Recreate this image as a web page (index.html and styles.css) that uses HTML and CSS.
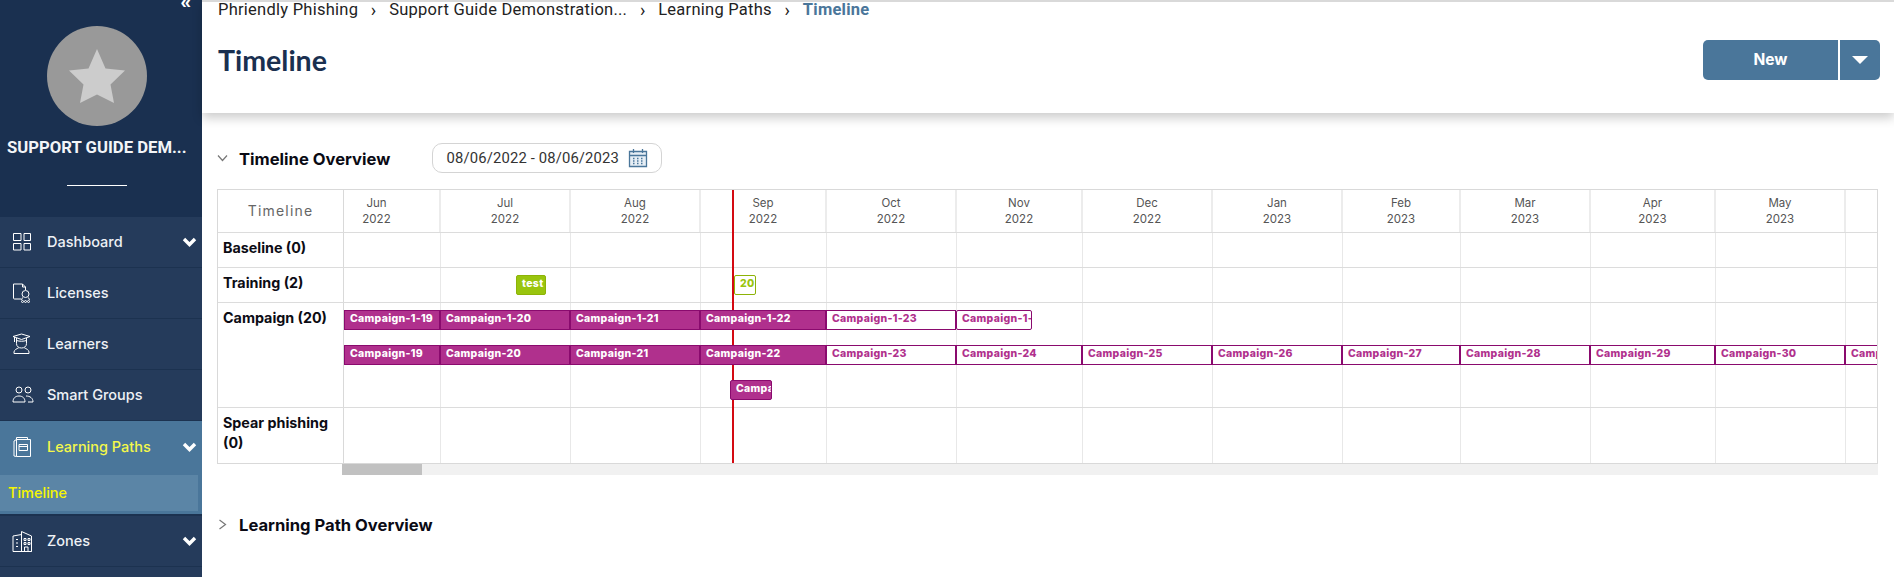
FILE: index.html
```html
<!DOCTYPE html>
<html lang="en">
<head>
<meta charset="utf-8">
<title>Timeline</title>
<link rel="stylesheet" href="styles.css">
</head>
<body>
<div class="app">
  <aside class="sidebar">
    <div class="profile">
      <span class="collapse">«</span>
      <div class="avatar">
        <svg width="58" height="56" viewBox="0 0 58 56"><path class="star" d="M29 1l8.500 19.500L57 22.500l-14.500 14L46 55 29 46.500 12 55l3.500-18.500L1 22.500l19.500-2z"/></svg>
      </div>
      <div class="org">SUPPORT GUIDE DEM...</div>
      <div class="rule"></div>
    </div>
    <nav class="menu">
      <div class="item">
        <svg class="ico" width="20" height="20" viewBox="0 0 20 20"><path d="M1.500 1.500h7.500v7h-7.500zM12 1.500h6.500v7h-6.500zM1.500 11.500h7.500v6.500h-7.500zM12 11.500h6.500v6.500h-6.500z"/></svg>
        <span>Dashboard</span><svg class="chev" width="15" height="10" viewBox="0 0 15 10"><path d="M2 2l5.500 5.500L13 2"/></svg>
      </div>
      <div class="item">
        <svg class="ico" width="20" height="22" viewBox="0 0 20 22"><path d="M9 17H2.500a1 1 0 0 1-1-1V2h9l3 3v3M10.500 2v3h3"/><circle cx="13.500" cy="12" r="3.500"/><path d="M10.500 15.500l-1 2.500M16.500 15.500l1 2.500"/><circle cx="10.500" cy="19.500" r="1"/><circle cx="13.500" cy="19.500" r="1"/><circle cx="16.500" cy="19.500" r="1"/></svg>
        <span>Licenses</span>
      </div>
      <div class="item">
        <svg class="ico" width="20" height="22" viewBox="0 0 20 22"><path d="M1 3.500L9.500 1l8.500 2.500-8.500 3zM4.500 5v5.500c0 3 2.200 4.500 5 4.500s5-1.500 5-4.500V5M4.500 7.500c3 1 7 1 10 0M2.500 4v5M2 20.500v-1.500c0-2 3-3.500 4.500-4M17 20.500v-1.500c0-2-3-3.500-4.500-4M2 20.500h15"/></svg>
        <span>Learners</span>
      </div>
      <div class="item">
        <svg class="ico" width="22" height="20" viewBox="0 0 22 20"><circle cx="7" cy="5" r="3"/><circle cx="16" cy="5" r="3"/><path d="M1 17c0-4 2.500-6 6-6s6 2 6 6zM14 11c4 0 7 2 7 6h-5"/></svg>
        <span>Smart Groups</span>
      </div>
      <div class="group">
        <div class="item active">
          <svg class="ico" width="20" height="22" viewBox="0 0 20 22"><path d="M4.500 3.500V1.500h11v2M4.500 3.500h14v17h-14zM4.500 3.500L2 5v15l2.500.500M7 8.500h8.500v6H7zM7 10.500h8.500"/></svg>
          <span>Learning Paths</span><svg class="chev" width="15" height="10" viewBox="0 0 15 10"><path d="M2 2l5.500 5.500L13 2"/></svg>
        </div>
        <div class="sub">Timeline</div>
      </div>
      <div class="item">
        <svg class="ico" width="21" height="23" viewBox="0 0 21 23"><path d="M1 21.500V6L9.500 4.500M9.500 1.500v20h10V6L9.500 1.500zM1 21.500h18.500M4 9.500h2M4 13h2M4 16.500h2M12 8.500h2v2h-2zM16 8.500h2v2h-2zM12 12.500h2v2h-2zM16 12.500h2v2h-2zM12.500 21v-4h3.500v4"/></svg>
        <span>Zones</span><svg class="chev" width="15" height="10" viewBox="0 0 15 10"><path d="M2 2l5.500 5.500L13 2"/></svg>
      </div>
      <div class="item"></div>
    </nav>
  </aside>

  <main class="main">
    <header class="topbar">
      <div class="crumbs">
        <a>Phriendly Phishing</a><i>›</i><a>Support Guide Demonstration...</a><i>›</i><a>Learning Paths</a><i>›</i><b>Timeline</b>
      </div>
      <div class="titlerow">
        <h1>Timeline</h1>
        <div class="btns">
          <button class="btn-new">New</button>
          <button class="btn-caret"><span class="caret"></span></button>
        </div>
      </div>
    </header>

    <section class="content">
      <div class="sechead">
        <svg class="togg" width="11" height="8" viewBox="0 0 11 8"><path d="M1 1.500l4.500 5 4.500-5"/></svg>
        <h2>Timeline Overview</h2>
        <div class="range">
          <span>08/06/2022 - 08/06/2023</span>
          <svg width="20" height="20" viewBox="0 0 20 20"><path class="cal" d="M1.500 3.500h17v15h-17zM1.500 7.500h17M5.500 1v4M14.500 1v4"/><path class="caldots" d="M5 10.500h1.500M9 10.500h1.500M13 10.500h1.500M5 13h1.500M9 13h1.500M13 13h1.500M5 15.500h1.500M9 15.500h1.500M13 15.500h1.500"/></svg>
        </div>
      </div>

      <div class="chart">
        <div class="row head">
          <div class="cell lab">Timeline</div>
          <div class="cell mon first">Jun<br>2022</div>
          <div class="cell mon">Jul<br>2022</div>
          <div class="cell mon">Aug<br>2022</div>
          <div class="cell mon">Sep<br>2022</div>
          <div class="cell mon">Oct<br>2022</div>
          <div class="cell mon">Nov<br>2022</div>
          <div class="cell mon">Dec<br>2022</div>
          <div class="cell mon">Jan<br>2023</div>
          <div class="cell mon">Feb<br>2023</div>
          <div class="cell mon">Mar<br>2023</div>
          <div class="cell mon">Apr<br>2023</div>
          <div class="cell mon">May<br>2023</div>
          <div class="cell mon"></div>
        </div>
        <div class="row r35">
          <div class="cell name">Baseline (0)</div>
          <div class="cell"></div><div class="cell"></div><div class="cell"></div><div class="cell"></div><div class="cell"></div><div class="cell"></div><div class="cell"></div><div class="cell"></div><div class="cell"></div><div class="cell"></div><div class="cell"></div><div class="cell"></div><div class="cell"></div>
        </div>
        <div class="row r35">
          <div class="cell name">Training (2)</div>
          <div class="cell"></div><div class="cell"></div><div class="cell"></div><div class="cell"></div><div class="cell"></div><div class="cell"></div><div class="cell"></div><div class="cell"></div><div class="cell"></div><div class="cell"></div><div class="cell"></div><div class="cell"></div><div class="cell"></div>
        </div>
        <div class="row r105">
          <div class="cell name">Campaign (20)</div>
          <div class="cell"></div><div class="cell"></div><div class="cell"></div><div class="cell"></div><div class="cell"></div><div class="cell"></div><div class="cell"></div><div class="cell"></div><div class="cell"></div><div class="cell"></div><div class="cell"></div><div class="cell"></div><div class="cell"></div>
        </div>
        <div class="row r56">
          <div class="cell name">Spear phishing (0)</div>
          <div class="cell"></div><div class="cell"></div><div class="cell"></div><div class="cell"></div><div class="cell"></div><div class="cell"></div><div class="cell"></div><div class="cell"></div><div class="cell"></div><div class="cell"></div><div class="cell"></div><div class="cell"></div><div class="cell"></div>
        </div>

        <div class="today"></div>

        <div class="lane l-train">
          <div class="bar green fill" style="margin-left:172px;width:30px">test</div>
          <div class="bar green" style="margin-left:188px;width:22px">20</div>
        </div>
        <div class="lane l-c1">
          <div class="bar fill" style="width:96px">Campaign-1-19</div>
          <div class="bar fill" style="width:130px">Campaign-1-20</div>
          <div class="bar fill" style="width:130px">Campaign-1-21</div>
          <div class="bar fill" style="width:126px">Campaign-1-22</div>
          <div class="bar" style="width:130px">Campaign-1-23</div>
          <div class="bar end" style="width:76px">Campaign-1-24</div>
        </div>
        <div class="lane l-c2">
          <div class="bar fill" style="width:96px">Campaign-19</div>
          <div class="bar fill" style="width:130px">Campaign-20</div>
          <div class="bar fill" style="width:130px">Campaign-21</div>
          <div class="bar fill" style="width:126px">Campaign-22</div>
          <div class="bar" style="width:130px">Campaign-23</div>
          <div class="bar" style="width:126px">Campaign-24</div>
          <div class="bar" style="width:130px">Campaign-25</div>
          <div class="bar" style="width:130px">Campaign-26</div>
          <div class="bar" style="width:118px">Campaign-27</div>
          <div class="bar" style="width:130px">Campaign-28</div>
          <div class="bar" style="width:125px">Campaign-29</div>
          <div class="bar" style="width:130px">Campaign-30</div>
          <div class="bar" style="width:40px">Campaign-31</div>
        </div>
        <div class="lane l-c3">
          <div class="bar fill end" style="margin-left:386px;width:42px">Campaign-1</div>
        </div>
      </div>

      <div class="scroll"><div class="thumb"></div></div>

      <div class="sechead second">
        <svg class="togg" width="9" height="11" viewBox="0 0 9 11"><path d="M1.500 1l6 4.500-6 4.500"/></svg>
        <h2>Learning Path Overview</h2>
      </div>
    </section>
  </main>
</div>
</body>
</html>
```

FILE: styles.css
```css
* { box-sizing: border-box; }
html, body { margin: 0; height: 100%; overflow: hidden; background: #fff; }
body { font-family: "Inter", "Liberation Sans", sans-serif; }

.app { display: flex; height: 577px; }

/* sidebar */
.sidebar { width: 202px; flex: none; background: #253b5b; color: #fff; overflow: hidden; }
.profile { height: 217px; background: #1a3050; position: relative; display: flex; flex-direction: column; align-items: center; padding-top: 26px; }
.collapse { position: absolute; top: -8px; right: 11px; font: 700 19px/19px "Liberation Sans", sans-serif; color: #fff; }
.avatar { width: 100px; height: 100px; border-radius: 50%; background: #999; display: flex; align-items: center; justify-content: center; margin-left: -9px; }
.star { fill: #ccc; }
.org { margin-top: 12px; width: 202px; padding-left: 7px; font: 700 16.700px/20px Roboto, sans-serif; white-space: nowrap; color: #f3f5f8; margin-bottom: 27px; }
.rule { width: 60px; height: 1px; background: #fff; margin-left: -8px; }

.item { height: 51px; display: flex; align-items: center; padding: 0 5px 0 12px; border-bottom: 1px solid #1c3250; font: 500 14.500px/16px "Inter", sans-serif; color: #eef1f5; position: relative; }
.item > span { position: absolute; left: 47px; }
.ico { fill: none; stroke: #fff; stroke-width: 1; flex: none; }
.chev { margin-left: auto; fill: none; stroke: #fff; stroke-width: 3.400; flex: none; }
.group { background: #4a769a; height: 95px; border-bottom: 2px solid #1c3250; }
.item.active { background: #4a769a; border: 0; height: 54px; padding-bottom: 3px; color: #f4f84a; }
.sub { height: 36px; width: 198px; background: #5b85a6; color: #f6f600; font: 500 14.500px/36px "Inter", sans-serif; padding-left: 8px; }

/* main */
.main { flex: 1; min-width: 0; display: flex; flex-direction: column; }
.topbar { height: 113px; border-top: 2px solid #d9d9d9; box-shadow: 0 5px 10px rgba(0,0,0,.2); padding: 1px 14px 0 16px; position: relative; }
.crumbs { display: flex; align-items: center; height: 14px; font: 400 16.500px/14px "Roboto", sans-serif; color: #222; letter-spacing: .25px; white-space: nowrap; }
.crumbs i { font-style: normal; width: 31px; text-align: center; font-size: 18px; }
.crumbs b { color: #4a769a; font-weight: 700; }
.titlerow { display: flex; justify-content: space-between; align-items: flex-start; padding-top: 23px; }
h1 { margin: 4px 0 0; font: 700 28.500px/32px "Lato", sans-serif; color: #1a3050; }
.btns { display: flex; gap: 2px; }
.btns button { height: 40px; border: 0; background: #4a769a; color: #fff; padding: 0; }
.btn-new { width: 135px; font: 700 15.500px/40px "Inter", sans-serif; border-radius: 5px 0 0 5px; }
.btn-caret { width: 40px; border-radius: 0 5px 5px 0; display: flex; align-items: center; justify-content: center; }
.caret { width: 0; height: 0; border: 8px solid transparent; border-top: 8px solid #fff; border-bottom: 0; }

.content { padding: 30px 16px 0 15px; }
.sechead { display: flex; align-items: center; height: 30px; }
.togg { fill: none; stroke: #777; stroke-width: 1.200; flex: none; }
.sechead h2 { margin: 2px 0 0 11px; font: 700 16.600px/20px "Inter", sans-serif; color: #0a0a14; white-space: nowrap; }
.range { margin-left: 42px; width: 230px; height: 30px; border: 1px solid #d4d4d4; border-radius: 10px; display: flex; align-items: center; justify-content: center; gap: 9px; font: 400 14.800px/20px "Roboto", sans-serif; color: #333; letter-spacing: .15px; }
.cal { fill: #e6eef5; stroke: #4a769a; stroke-width: 1.300; }
.caldots { fill: none; stroke: #4a769a; stroke-width: 1.300; }

/* chart */
.chart { margin-top: 16px; width: 1661px; height: 275px; border: 1px solid #d9d9d9; position: relative; overflow: hidden; }
.row { display: grid; grid-template-columns: 126px 97px 130px 130px 126px 130px 126px 130px 130px 118px 130px 125px 130px 31px; border-bottom: 1px solid #dcdcdc; }
.row.head { height: 43px; }
.r35 { height: 35px; }
.r105 { height: 105px; }
.r56 { height: 55px; border-bottom: 0; }
.cell { border-right: 1px solid #e8e8e8; min-width: 0; }
.row > .cell:last-child { border-right: 0; }
.row > .cell:first-child { border-right: 1px solid #d9d9d9; }
.head .cell { border-right: 2px solid #ececec; }
.head .lab { display: flex; align-items: center; justify-content: center; font: 400 14px/16px "Inter", sans-serif; letter-spacing: 1.200px; color: #666; border-right: 1px solid #d9d9d9; }
.mon { text-align: center; font: 400 11.500px/16px "Inter", sans-serif; color: #555; padding-top: 5px; }
.mon.first { padding-right: 30px; }
.name { font: 700 14.300px/20px "Inter", sans-serif; color: #0c0c14; padding: 5px 4px 0 5px; }

.today { position: absolute; left: 514px; top: 0; bottom: 0; width: 2px; background: #d40a12; }
.lane { position: absolute; left: 126px; display: flex; height: 20px; white-space: nowrap; }
.l-train { top: 85px; }
.l-c1 { top: 120px; }
.l-c2 { top: 155px; }
.l-c3 { top: 190px; }
.bar { height: 20px; flex: none; overflow: hidden; border: 1px solid #8a0a6e; color: #b0308d; background: #fff; font: 800 10.500px/16px "Inter", sans-serif; padding-left: 5px; letter-spacing: .3px; }
.bar.fill { background: #b0308d; color: #fff; }
.bar.end { border-radius: 2px; }
.bar.green { border: 1px solid #8db307; color: #99c50e; border-radius: 2px; }
.bar.green.fill { background: #99c50e; color: #fff; }

.scroll { margin-left: 125px; width: 1536px; height: 11px; background: #f1f1f1; }
.thumb { width: 80px; height: 11px; background: #c1c1c1; }
.second { margin-top: 34px; }
.second .togg { margin-left: 1px; }
.second h2 { margin-left: 12px; }
```
